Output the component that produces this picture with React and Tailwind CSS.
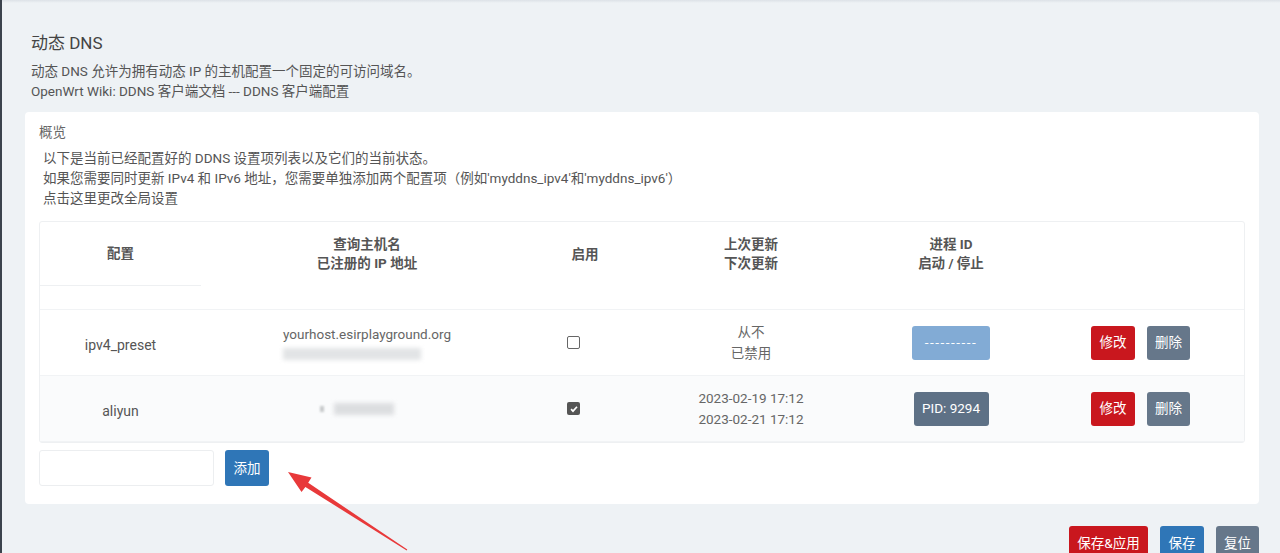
import React from 'react';

const cols = 'grid grid-cols-[161px_332px_104px_228px_172px_1fr]';

function Btn({ children, className = '' }) {
  return (
    <span className={`inline-flex h-[34px] shrink-0 items-center justify-center whitespace-nowrap rounded-[3px] text-[13.5px] text-white ${className}`}>
      {children}
    </span>
  );
}

function Check({ checked }) {
  return checked ? (
    <span className="inline-flex h-[13px] w-[13px] items-center justify-center rounded-[2px] bg-[#555]">
      <svg viewBox="0 0 12 12" className="h-[10px] w-[10px]" fill="none" stroke="white" strokeWidth="2">
        <path d="M2.5 6.2l2.3 2.4L9.6 3.3" />
      </svg>
    </span>
  ) : (
    <span className="inline-block h-[13px] w-[13px] rounded-[2px] border border-[#666] bg-white" />
  );
}

function Row({ name, host, blur, checked, last, next, pid, striped }) {
  return (
    <div className={`${cols} h-[66px] items-center border-b border-[#f1f3f5] text-[13.5px] text-[#555] ${striped ? 'bg-[#fafbfc]' : 'bg-white'}`}>
      <div className="pt-[6px] text-center text-[14px]">{name}</div>
      <div className="flex flex-col items-center">
        {host && <div className="leading-[19px] text-[#666]">{host}</div>}
        {blur}
      </div>
      <div className="flex pl-[34px]">
        <Check checked={checked} />
      </div>
      <div className="text-center leading-[21px] text-[#666]">
        <div>{last}</div>
        <div>{next}</div>
      </div>
      <div className="flex justify-center">{pid}</div>
      <div className="flex justify-center gap-[12px]">
        <Btn className="w-[44px] bg-[#c9171e]">修改</Btn>
        <Btn className="w-[43px] bg-[#66778a]">删除</Btn>
      </div>
    </div>
  );
}

export default function App() {
  return (
    <div
      className="relative min-h-screen w-full overflow-hidden border-l-[2px] border-[#3b434d] bg-[#eef2f5]"
      style={{ fontFamily: 'Roboto, "Noto Sans CJK SC", sans-serif' }}
    >
      <div className="h-[3px] bg-gradient-to-b from-[#dde2e7] to-[#eef2f5]" />
      <div className="pl-[23px] pr-[21px] pt-[28px]">
        <h2 className="pl-[6px] text-[17px] leading-[24px] text-[#444]">动态 DNS</h2>
        <div className="mt-[7px] pl-[6px] text-[13.5px] leading-[19.5px] text-[#555]">
          <p>动态 DNS 允许为拥有动态 IP 的主机配置一个固定的可访问域名。</p>
          <p>OpenWrt Wiki: DDNS 客户端文档 --- DDNS 客户端配置</p>
        </div>

        <div className="mt-[11px] rounded-[4px] bg-white px-[14px] pb-[18px] pt-[10px]">
          <div className="text-[13.5px] leading-[20px] text-[#666]">概览</div>
          <div className="mt-[6px] pl-[4px] text-[13.5px] leading-[20px] text-[#555]">
            <p>以下是当前已经配置好的 DDNS 设置项列表以及它们的当前状态。</p>
            <p>如果您需要同时更新 IPv4 和 IPv6 地址，您需要单独添加两个配置项（例如'myddns_ipv4'和'myddns_ipv6'）</p>
            <p>点击这里更改全局设置</p>
          </div>

          <div className="mt-[13px] rounded-[3px] border border-[#eef0f2]">
            <div className={`${cols} h-[64px] items-center text-[13.5px] font-bold leading-[19px] text-[#555]`}>
              <div className="flex h-full items-center justify-center border-b border-[#eef0f2]">配置</div>
              <div className="text-center">
                <div>查询主机名</div>
                <div>已注册的 IP 地址</div>
              </div>
              <div className="text-center">启用</div>
              <div className="text-center">
                <div>上次更新</div>
                <div>下次更新</div>
              </div>
              <div className="text-center">
                <div>进程 ID</div>
                <div>启动 / 停止</div>
              </div>
              <div />
            </div>
            <div className="h-[24px] border-b border-[#f1f3f5]" />

            <Row
              name="ipv4_preset"
              host="yourhost.esirplayground.org"
              blur={<div className="mr-[30px] mt-[4px] h-[12px] w-[138px] bg-[#e2e4e6] blur-[2px]" />}
              checked={false}
              last="从不"
              next="已禁用"
              pid={<Btn className="w-[78px] bg-[#82abd5] tracking-[1.5px]">----------</Btn>}
            />
            <Row
              name="aliyun"
              striped
              blur={
                <div className="mr-[20px] flex items-center gap-[10px]">
                  <div className="h-[6px] w-[4px] bg-[#c7c9cb] blur-[1px]" />
                  <div className="h-[12px] w-[60px] bg-[#dcdee0] blur-[2px]" />
                </div>
              }
              checked
              last="2023-02-19 17:12"
              next="2023-02-21 17:12"
              pid={<Btn className="w-[75px] bg-[#5e7186]">PID: 9294</Btn>}
            />
          </div>

          <div className="mt-[7px] flex items-center gap-[11px]">
            <input className="h-[36px] w-[175px] rounded-[3px] border border-[#eceef0] bg-white outline-none" />
            <Btn className="h-[36px] w-[44px] bg-[#2f76b7]">添加</Btn>
          </div>
        </div>

        <div className="mt-[22px] flex justify-end gap-[12px]">
          <Btn className="w-[79px] bg-[#c9171e]">保存&amp;应用</Btn>
          <Btn className="w-[44px] bg-[#2f76b7]">保存</Btn>
          <Btn className="w-[43px] bg-[#66778a]">复位</Btn>
        </div>
      </div>

      <svg className="pointer-events-none absolute left-0 top-0" width="1280" height="553">
        <polygon
          fill="#e8393a"
          points="286,472 309.5,477.5 306.2,482.8 405.3,549.6 404.7,550.4 303.4,487 299.5,492"
        />
      </svg>
    </div>
  );
}
